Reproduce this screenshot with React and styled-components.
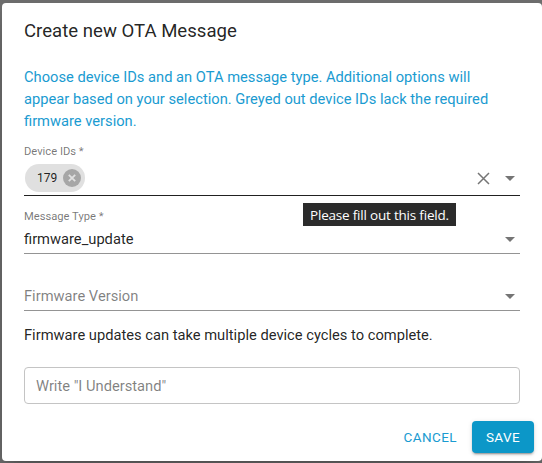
import React from 'react';
import styled, { createGlobalStyle } from 'styled-components';

const GlobalStyle = createGlobalStyle`
  *, *::before, *::after { box-sizing: border-box; }
  html, body { margin: 0; padding: 0; }
  body {
    font-family: Roboto, 'Liberation Sans', sans-serif;
    background: #6e6e6e;
    width: 542px;
    height: 463px;
    overflow: hidden;
  }
`;

const Backdrop = styled.div`
  position: relative;
  width: 542px;
  height: 463px;
  padding: 3px 0 0 2px;
  background: #6e6e6e;
`;

const Dialog = styled.div`
  position: relative;
  width: 540px;
  height: 458px;
  background: #fff;
  border-radius: 4px;
  box-shadow: 0 11px 15px -7px rgba(0,0,0,0.2), 0 24px 38px 3px rgba(0,0,0,0.14);
  display: flex;
  flex-direction: column;
  padding: 0 22px;
`;

const Title = styled.h2`
  margin: 12px 0 0;
  font-size: 18.6px;
  line-height: 32px;
  font-weight: 400;
  color: rgba(0, 0, 0, 0.87);
`;

const Intro = styled.p`
  margin: 19px 0 0;
  padding-right: 12px;
  font-size: 14.7px;
  line-height: 22px;
  color: #1a9bd1;
`;

const Field = styled.div`
  position: relative;
  margin-top: ${p => p.$mt}px;
`;

const SmallLabel = styled.div`
  font-size: 11.2px;
  line-height: 15px;
  color: rgba(0, 0, 0, 0.54);
`;

const InputRow = styled.div`
  display: flex;
  align-items: center;
  gap: 8px;
  margin-top: ${p => p.$mt || 0}px;
  padding-bottom: ${p => p.$pb}px;
  border-bottom: 1px solid ${p => (p.$active ? 'rgba(0,0,0,0.87)' : 'rgba(0,0,0,0.42)')};
`;

const Value = styled.div`
  flex: 1;
  font-size: 14.7px;
  line-height: 19px;
  color: ${p => (p.$placeholder ? 'rgba(0,0,0,0.5)' : 'rgba(0,0,0,0.87)')};
`;

const Tags = styled.div`
  flex: 1;
  display: flex;
  padding-left: 1px;
`;

const Chip = styled.div`
  display: inline-flex;
  align-items: center;
  height: 28px;
  padding: 0 4px 0 12px;
  border-radius: 14px;
  background: #e0e0e0;
  font-size: 12px;
  color: rgba(0, 0, 0, 0.87);
  gap: 6px;
`;

const IconBtn = styled.span`
  display: inline-flex;
  align-items: center;
  justify-content: center;
  width: ${p => p.$w || 18}px;
  height: 18px;
  color: rgba(0, 0, 0, 0.54);
`;

const Tooltip = styled.div`
  position: absolute;
  left: 279px;
  top: 59px;
  height: 23px;
  padding: 0 7px;
  display: flex;
  align-items: center;
  background: #2b2b2b;
  color: #fff;
  font-family: 'Open Sans', 'Noto Sans', sans-serif;
  font-size: 13.5px;
  letter-spacing: -0.2px;
  white-space: nowrap;
  z-index: 2;
`;

const Note = styled.p`
  margin: 13px 0 0;
  font-size: 14.7px;
  line-height: 22px;
  color: rgba(0, 0, 0, 0.87);
`;

const Outlined = styled.input`
  margin-top: 21px;
  width: 100%;
  height: 37px;
  border: 1px solid #c4c4c4;
  border-radius: 4px;
  padding: 0 11px;
  font-family: Roboto, 'Liberation Sans', sans-serif;
  font-size: 14.7px;
  color: rgba(0, 0, 0, 0.87);
  outline: none;
  &::placeholder { color: rgba(0, 0, 0, 0.5); }
`;

const Actions = styled.div`
  margin: 17px -14px 0 0;
  display: flex;
  justify-content: flex-end;
  align-items: center;
  gap: 7px;
`;

const Button = styled.button`
  height: 32px;
  min-width: 62px;
  padding: 0 ${p => (p.$primary ? 14 : 8)}px;
  border: none;
  border-radius: 4px;
  font-family: Roboto, 'Liberation Sans', sans-serif;
  font-size: 13.5px;
  letter-spacing: 0.4px;
  text-transform: uppercase;
  cursor: pointer;
  background: ${p => (p.$primary ? '#0c97c8' : 'transparent')};
  color: ${p => (p.$primary ? '#fff' : '#1a9bd1')};
  box-shadow: ${p => (p.$primary ? '0 3px 1px -2px rgba(0,0,0,0.2), 0 2px 2px 0 rgba(0,0,0,0.14), 0 1px 5px 0 rgba(0,0,0,0.12)' : 'none')};
`;

const Arrow = () => (
  <IconBtn $w={20}>
    <svg width="10" height="5" viewBox="0 0 10 5"><path d="M0 0h10L5 5z" fill="currentColor" /></svg>
  </IconBtn>
);

const ClearX = () => (
  <IconBtn>
    <svg width="13" height="13" viewBox="0 0 13 13">
      <path d="M1 1l11 11M12 1L1 12" stroke="currentColor" strokeWidth="1.5" />
    </svg>
  </IconBtn>
);

const ChipDelete = () => (
  <svg width="18" height="18" viewBox="0 0 18 18">
    <circle cx="9" cy="9" r="9" fill="#a6a6a6" />
    <path d="M5.8 5.8l6.4 6.4M12.2 5.8l-6.4 6.4" stroke="#e0e0e0" strokeWidth="1.8" />
  </svg>
);

export default function App() {
  return (
    <>
      <GlobalStyle />
      <Backdrop>
        <Dialog>
          <Title>Create new OTA Message</Title>
          <Intro>
            Choose device IDs and an OTA message type. Additional options will appear
            based on your selection. Greyed out device IDs lack the required firmware version.
          </Intro>

          <Field $mt={12}>
            <SmallLabel>Device IDs *</SmallLabel>
            <InputRow $mt={5} $pb={3} $active>
              <Tags>
                <Chip>179<ChipDelete /></Chip>
              </Tags>
              <ClearX />
              <Arrow />
            </InputRow>
            <Tooltip>Please fill out this field.</Tooltip>
          </Field>

          <Field $mt={13}>
            <SmallLabel>Message Type *</SmallLabel>
            <InputRow $mt={6} $pb={4}>
              <Value>firmware_update</Value>
              <Arrow />
            </InputRow>
          </Field>

          <Field $mt={33}>
            <InputRow $pb={4}>
              <Value $placeholder>Firmware Version</Value>
              <Arrow />
            </InputRow>
          </Field>

          <Note>Firmware updates can take multiple device cycles to complete.</Note>

          <Outlined placeholder={'Write "I Understand"'} />

          <Actions>
            <Button>Cancel</Button>
            <Button $primary>Save</Button>
          </Actions>
        </Dialog>
      </Backdrop>
    </>
  );
}
